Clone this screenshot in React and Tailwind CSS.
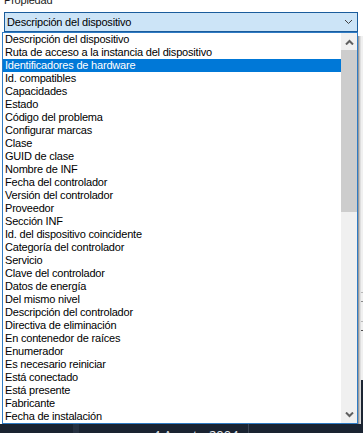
const items = [
  'Descripción del dispositivo',
  'Ruta de acceso a la instancia del dispositivo',
  'Identificadores de hardware',
  'Id. compatibles',
  'Capacidades',
  'Estado',
  'Código del problema',
  'Configurar marcas',
  'Clase',
  'GUID de clase',
  'Nombre de INF',
  'Fecha del controlador',
  'Versión del controlador',
  'Proveedor',
  'Sección INF',
  'Id. del dispositivo coincidente',
  'Categoría del controlador',
  'Servicio',
  'Clave del controlador',
  'Datos de energía',
  'Del mismo nivel',
  'Descripción del controlador',
  'Directiva de eliminación',
  'En contenedor de raíces',
  'Enumerador',
  'Es necesario reiniciar',
  'Está conectado',
  'Está presente',
  'Fabricante',
  'Fecha de instalación',
];

function Chevron({ up, className }) {
  return (
    <svg width="9" height="6" viewBox="0 0 9 6" className={className}>
      <polyline
        points={up ? '1,5 4.5,1.5 8,5' : '1,1 4.5,4.5 8,1'}
        fill="none"
        stroke="currentColor"
        strokeWidth="1"
      />
    </svg>
  );
}

function ScrollArrow({ up }) {
  return (
    <div className="h-[17px] flex items-center justify-center text-[#606060]">
      <svg width="9" height="6" viewBox="0 0 9 6">
        <polyline
          points={up ? '1,5.5 4.5,2 8,5.5' : '1,0.5 4.5,4 8,0.5'}
          fill="none"
          stroke="currentColor"
          strokeWidth="2"
        />
      </svg>
    </div>
  );
}

export default function App() {
  return (
    <div
      className="w-[363px] h-[433px] overflow-hidden bg-white flex flex-col text-[11px] tracking-[-0.2px] text-black"
      style={{ fontFamily: '"Liberation Sans", Arial, sans-serif' }}
    >
      <div className="flex h-[424px]">
        <div className="w-[358px] flex flex-col">
          <div className="h-[12px] overflow-hidden pl-[4px]">
            <div className="leading-[13px] -mt-[6px] text-[#1a1a1a]">Propiedad</div>
          </div>
          <div className="ml-[4px] w-[354px] h-[20px] bg-[#cce4f7] border border-[#1a5c9c] flex items-center pl-[2px] pr-[4px]">
            <span className="flex-1">Descripción del dispositivo</span>
            <Chevron className="text-[#404040]" />
          </div>
          <div className="ml-[2px] w-[356px] h-[392px] border border-[#2f7bc4] bg-white flex">
            <div className="flex-1 flex flex-col">
              {items.map((it, i) => (
                <div
                  key={it}
                  className={
                    i === 2
                      ? 'h-[13px] leading-[13px] pl-[2px] bg-[#0078d7] text-white'
                      : 'h-[13px] leading-[13px] pl-[2px]'
                  }
                >
                  {it}
                </div>
              ))}
            </div>
            <div className="w-[16px] bg-[#f0f0f0] flex flex-col">
              <ScrollArrow up />
              <div className="h-[162px] bg-[#cdcdcd]" />
              <div className="flex-1" />
              <ScrollArrow />
            </div>
          </div>
        </div>
        <div className="flex-1 flex flex-col">
          <div className="h-[36px] bg-white" />
          <div className="flex-1 flex bg-[#f0f0f0]">
            <div className="w-[1px] bg-[#9a9a9a]" />
            <div className="w-[1px] bg-[#c4c4c4]" />
            <div className="w-[1px] bg-[#dedede]" />
            <div className="flex-1 flex flex-col">
              <div className="h-[256px]" />
              <div className="h-[1px] bg-[#b8b8b8]" />
              <div className="h-[8px]" />
              <div className="h-[1px] bg-[#8a8a8a]" />
              <div className="h-[19px]" />
              <div className="h-[1px] bg-[#b8b8b8]" />
              <div className="h-[8px]" />
              <div className="h-[1px] bg-[#505050]" />
              <div className="flex-1" />
              <div className="h-[44px] bg-[#1c2533]" />
            </div>
          </div>
        </div>
      </div>
      <div className="flex-1 bg-[#1a2331] flex">
        <div className="w-[73px]" />
        <div className="w-[6px] bg-[#263040]" />
        <div className="flex-1 flex pl-[74px]">
          <span
            className="text-[#e8ecf0] text-[13px] leading-[16px] tracking-normal mt-[3px]"
            style={{ fontFamily: '"Open Sans", sans-serif' }}
          >
            4 Agosto 2004
          </span>
        </div>
        <div className="w-[1px] bg-[#3a4454] mr-[114px]" />
      </div>
    </div>
  );
}
